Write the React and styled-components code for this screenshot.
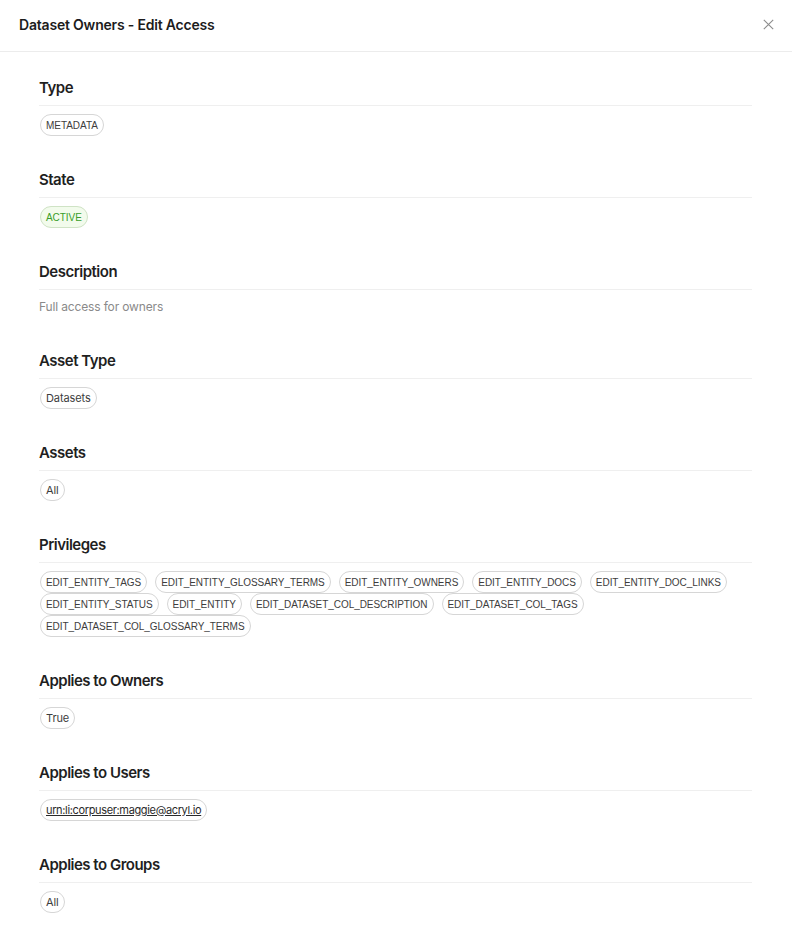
import React from "react";
import styled, { createGlobalStyle, css } from "styled-components";

const Global = createGlobalStyle`
  * { box-sizing: border-box; }
  html, body { margin: 0; padding: 0; background: #ffffff; }
  body { font-family: Inter, "Noto Sans", sans-serif; color: #1f1f1f; }
`;

const Modal = styled.div`
  width: 792px;
  min-height: 930px;
  background: #fff;
  display: flex;
  flex-direction: column;
`;

const Header = styled.header`
  height: 52px;
  border-bottom: 1px solid #ececec;
  display: flex;
  align-items: center;
  justify-content: space-between;
  padding: 0 18px 2px 19px;
`;

const Title = styled.h1`
  margin: 0;
  font-size: 14px;
  font-weight: 600;
  letter-spacing: -0.2px;
  color: #1c1c1c;
`;

const CloseButton = styled.button`
  border: none;
  background: none;
  padding: 0;
  width: 12px;
  height: 12px;
  display: flex;
  align-items: center;
  justify-content: center;
  cursor: pointer;
`;

const Body = styled.div`
  padding: 23px 40px 0 39px;
  display: flex;
  flex-direction: column;
`;

const Section = styled.section`
  margin-bottom: 31px;
`;

const Heading = styled.h2`
  margin: 0 0 8px;
  font-size: 15px;
  line-height: 24px;
  font-weight: 600;
  letter-spacing: -0.5px;
  color: #1f1f1f;
  padding: 1px 0 5px;
  border-bottom: 1px solid #efefef;
`;

const Tags = styled.div`
  display: flex;
  flex-wrap: wrap;
  column-gap: 8px;
  row-gap: 0;
  padding-left: 1px;
`;

const Tag = styled.span`
  display: inline-flex;
  align-items: center;
  height: 22px;
  padding: 0 5px;
  border: 1px solid #d6d6d6;
  border-radius: 11px;
  background: #fff;
  color: #3d3d3d;
  white-space: nowrap;
  ${(p) =>
    p.$code
      ? css`
          font-family: "Liberation Sans", Arial, sans-serif;
          font-size: 10px;
          letter-spacing: -0.05px;
        `
      : css`
          font-family: Inter, sans-serif;
          font-size: 11px;
          letter-spacing: -0.1px;
        `}
  ${(p) =>
    p.$success &&
    css`
      background: #f2fbec;
      border-color: #cfe3c5;
      color: #3a9e2a;
    `}
  ${(p) =>
    p.$link &&
    css`
      text-decoration: underline;
      letter-spacing: -0.35px;
      color: #2a2a2a;
    `}
`;

const Description = styled.p`
  margin: -1px 0 0;
  font-size: 12px;
  line-height: 20px;
  letter-spacing: -0.15px;
  color: #8a8a8a;
`;

const privileges = [
  "EDIT_ENTITY_TAGS",
  "EDIT_ENTITY_GLOSSARY_TERMS",
  "EDIT_ENTITY_OWNERS",
  "EDIT_ENTITY_DOCS",
  "EDIT_ENTITY_DOC_LINKS",
  "EDIT_ENTITY_STATUS",
  "EDIT_ENTITY",
  "EDIT_DATASET_COL_DESCRIPTION",
  "EDIT_DATASET_COL_TAGS",
  "EDIT_DATASET_COL_GLOSSARY_TERMS",
];

export default function App() {
  return (
    <>
      <Global />
      <Modal>
        <Header>
          <Title>Dataset Owners - Edit Access</Title>
          <CloseButton aria-label="Close">
            <svg width="11" height="11" viewBox="0 0 11 11">
              <path
                d="M0.8 0.8 L10.2 10.2 M10.2 0.8 L0.8 10.2"
                stroke="#8c8c8c"
                strokeWidth="1.1"
                fill="none"
              />
            </svg>
          </CloseButton>
        </Header>
        <Body>
          <Section>
            <Heading>Type</Heading>
            <Tags>
              <Tag $code>METADATA</Tag>
            </Tags>
          </Section>
          <Section>
            <Heading>State</Heading>
            <Tags>
              <Tag $code $success>ACTIVE</Tag>
            </Tags>
          </Section>
          <Section>
            <Heading>Description</Heading>
            <Description>Full access for owners</Description>
          </Section>
          <Section>
            <Heading>Asset Type</Heading>
            <Tags>
              <Tag>Datasets</Tag>
            </Tags>
          </Section>
          <Section>
            <Heading>Assets</Heading>
            <Tags>
              <Tag>All</Tag>
            </Tags>
          </Section>
          <Section>
            <Heading>Privileges</Heading>
            <Tags>
              {privileges.map((p) => (
                <Tag $code key={p}>
                  {p}
                </Tag>
              ))}
            </Tags>
          </Section>
          <Section>
            <Heading>Applies to Owners</Heading>
            <Tags>
              <Tag>True</Tag>
            </Tags>
          </Section>
          <Section>
            <Heading>Applies to Users</Heading>
            <Tags>
              <Tag $link>urn:li:corpuser:maggie@acryl.io</Tag>
            </Tags>
          </Section>
          <Section>
            <Heading>Applies to Groups</Heading>
            <Tags>
              <Tag>All</Tag>
            </Tags>
          </Section>
        </Body>
      </Modal>
    </>
  );
}
